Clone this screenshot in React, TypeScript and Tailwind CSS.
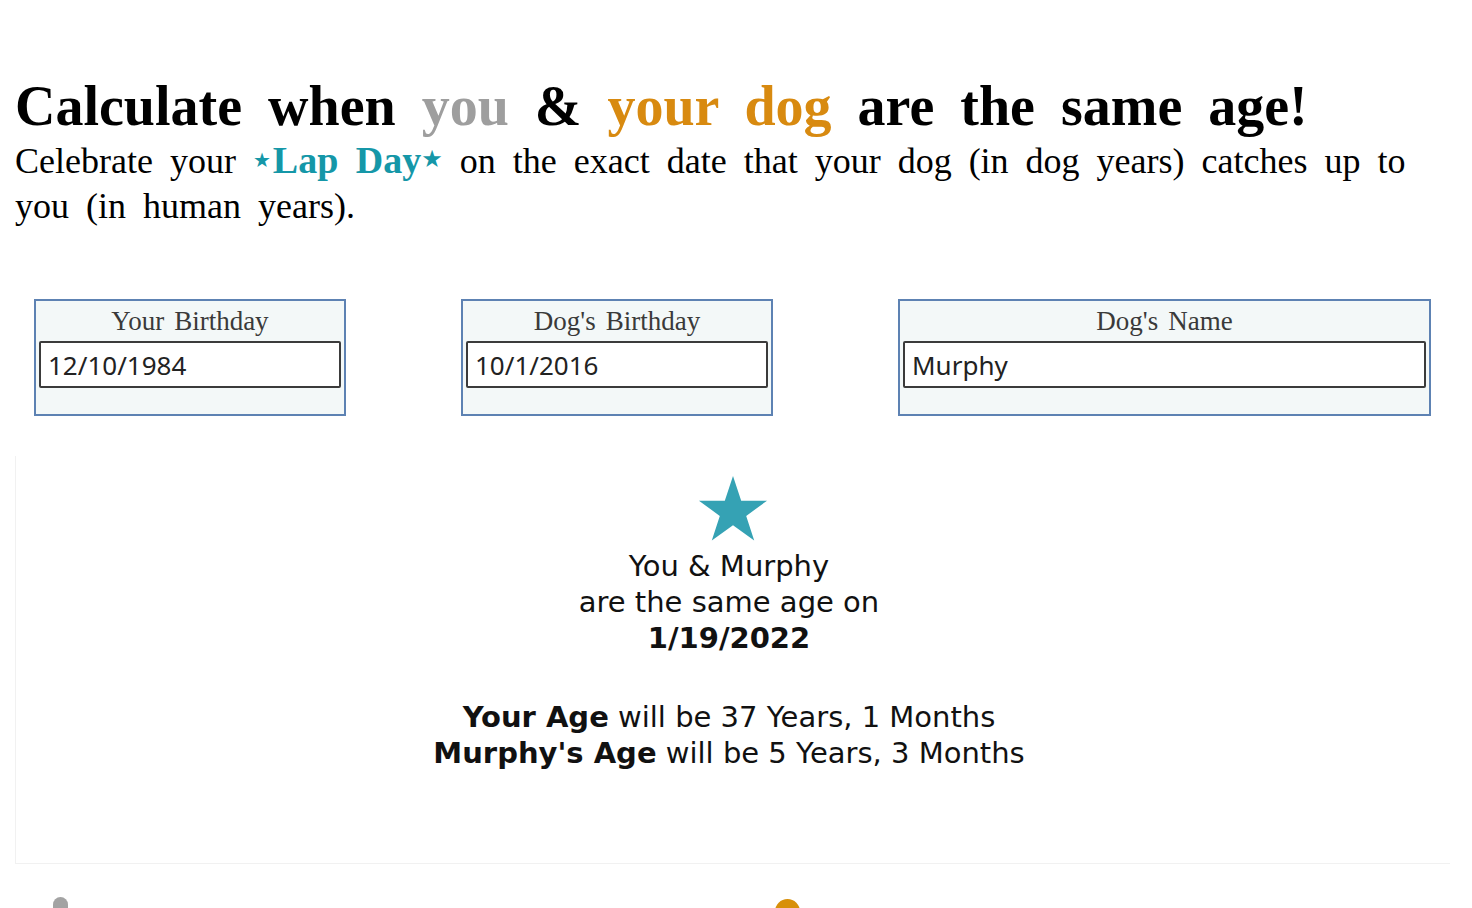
import React from 'react';

// --- Lap Day calculator page ---
const serif = "font-['Liberation_Serif','Times_New_Roman',serif]";
const sans = "font-['DejaVu_Sans','Verdana',sans-serif]";

const fields = [
  { label: 'Your Birthday', value: '12/10/1984', box: 'ml-[19px] w-[312px]' },
  { label: "Dog's Birthday", value: '10/1/2016', box: 'ml-[115px] w-[312px]' },
  { label: "Dog's Name", value: 'Murphy', box: 'ml-[125px] w-[533px]' },
];

function Field({ label, value, box }: { label: string; value: string; box: string }) {
  return (
    <div className={`${box} h-[117px] border-2 border-[#5d82b3] bg-[#f3f8f8] px-[3px] flex flex-col`}>
      <div className={`${serif} text-[27px] leading-[40px] text-[#3a3a3a] text-center [word-spacing:0.12em]`}>{label}</div>
      <input
        readOnly
        value={value}
        className="h-[47px] w-full border-2 border-[#3b3b3b] rounded-[2px] bg-white px-[7px] text-[26px] text-[#222] font-['Noto_Sans','Open_Sans',sans-serif] outline-none"
      />
    </div>
  );
}

function Star({ className }: { className?: string }) {
  return (
    <svg viewBox="0 0 100 95" className={className} fill="currentColor">
      <polygon points="50,0 61.8,35.5 99,35.5 69,57.5 80.5,93 50,71 19.5,93 31,57.5 1,35.5 38.2,35.5" />
    </svg>
  );
}

export default function App() {
  return (
    <div className="min-h-screen bg-white text-black px-[15px] pt-[74px] overflow-hidden">
      {/* header */}
      <div className="w-[1435px]">
        <h1 className={`${serif} font-bold text-[56px] leading-[64px] [word-spacing:12px] whitespace-nowrap`}>
          Calculate when <span className="text-[#9e9e9e]">you</span> &amp;{' '}
          <span className="text-[#d88a10]">your dog</span> are the same age!
        </h1>
        <p className={`${serif} text-[36px] leading-[45px] [word-spacing:8px]`}>
          Celebrate your{' '}
          <span className="font-bold text-[38px] text-[#1597a8]">
            <span className="inline-block text-[20px] leading-none align-[6px] mr-[2px] font-['DejaVu_Sans',sans-serif]">★</span>Lap Day
            <span className="inline-block text-[24px] leading-none align-[6px] font-['DejaVu_Sans',sans-serif]">★</span>
          </span>{' '}
          on the exact date that your dog (in dog years) catches up to you (in human years).
        </p>
      </div>

      {/* inputs */}
      <div className="mt-[70px] flex">
        {fields.map((f) => (
          <Field key={f.label} {...f} />
        ))}
      </div>

      {/* result */}
      <div className="mt-[40px] w-[1435px] h-[408px] border-l border-b border-[#f1f1f1] bg-white flex flex-col items-center pt-[20px]">
        <Star className="w-[70px] h-[66px] text-[#35a2b4]" />
        <div className={`${sans} mt-[6px] pr-[8px] text-[29px] leading-[36px] text-[#111] text-center`}>
          <div>You &amp; Murphy</div>
          <div>are the same age on</div>
          <div className="font-bold">1/19/2022</div>
          <div className="mt-[43px]">
            <span className="font-bold">Your Age</span> will be 37 Years, 1 Months
          </div>
          <div>
            <span className="font-bold">Murphy's Age</span> will be 5 Years, 3 Months
          </div>
        </div>
      </div>

      {/* chart markers (cut off by the viewport) */}
      <div className="mt-[33px] flex items-start h-[40px]">
        <div className="ml-[38px] w-[15px] h-[40px] rounded-t-full bg-[#a3a3a3]" />
        <div className="ml-[707px] mt-[2px] w-[25px] h-[40px] rounded-t-full bg-[#d8900a]" />
      </div>
    </div>
  );
}
